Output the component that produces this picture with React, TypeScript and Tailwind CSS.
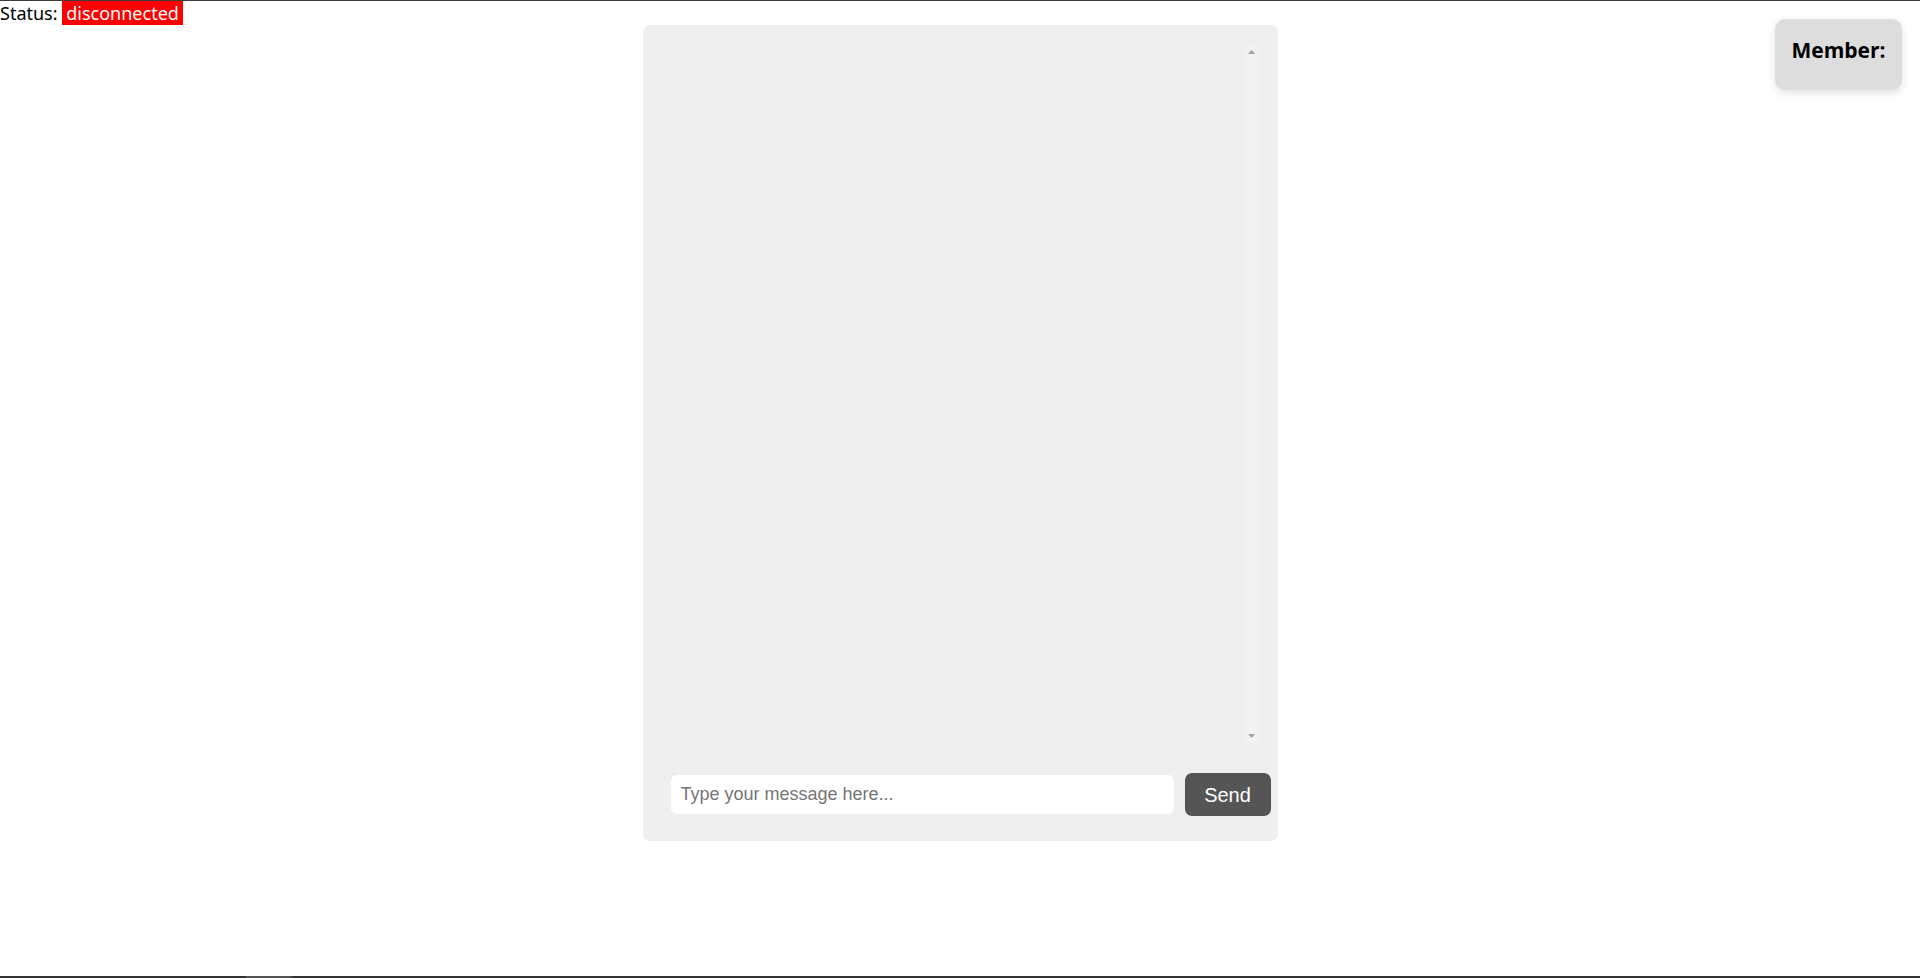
import React from "react";

export default function App() {
  return (
    <div className="relative w-[1920px] h-[978px] bg-white overflow-hidden flex flex-col">
      <div className="h-px bg-[#3c3c3c] w-full shrink-0" />
      <div className="h-[24px] leading-[24px] text-[18px] text-black font-['Noto_Sans',sans-serif] whitespace-pre shrink-0">
        Status: <span className="inline-block bg-[#ff0000] text-white px-[4px] leading-[24px]">disconnected</span>
      </div>
      <div className="mx-auto w-[635px] h-[816px] bg-[#efefef] rounded-[7px] flex flex-col shrink-0">
        <div className="mt-[20px] ml-[20px] mr-[19px] h-[698px] flex">
          <div className="flex-1" />
          <div className="w-[15px] bg-[#f2f2f2] flex flex-col items-center justify-between py-[5px]">
            <svg width="7" height="4" viewBox="0 0 7 4"><polygon points="3.5,0 7,4 0,4" fill="#a3a3a3" /></svg>
            <svg width="7" height="4" viewBox="0 0 7 4"><polygon points="0,0 7,0 3.5,4" fill="#a3a3a3" /></svg>
          </div>
        </div>
        <div className="mt-[30px] ml-[28px] mr-[7px] flex items-center gap-[11px]">
          <input
            className="w-[503px] h-[39px] bg-white rounded-[6px] px-[10px] text-[18px] font-['Liberation_Sans',Arial,sans-serif] placeholder:text-[#757575] outline-none"
            placeholder="Type your message here..."
          />
          <button className="w-[86px] h-[43px] bg-[#555555] rounded-[7px] text-white text-[20px] font-['Liberation_Sans',Arial,sans-serif]">
            Send
          </button>
        </div>
      </div>
      <div className="absolute top-[19px] right-[18px] w-[127px] h-[71px] rounded-[10px] bg-[#dddddd] shadow-[0_3px_8px_rgba(0,0,0,0.12)] flex items-center justify-center pb-[9px]">
        <span className="text-[21px] font-bold text-black font-['Open_Sans',sans-serif] leading-none">Member:</span>
      </div>
      <div className="mt-auto h-[2px] w-full flex shrink-0">
        <div className="w-[246px] bg-[#333333]" />
        <div className="w-[44px] bg-[#555555]" />
        <div className="w-[3px] bg-[#444444]" />
        <div className="flex-1 bg-[#333333]" />
      </div>
    </div>
  );
}
